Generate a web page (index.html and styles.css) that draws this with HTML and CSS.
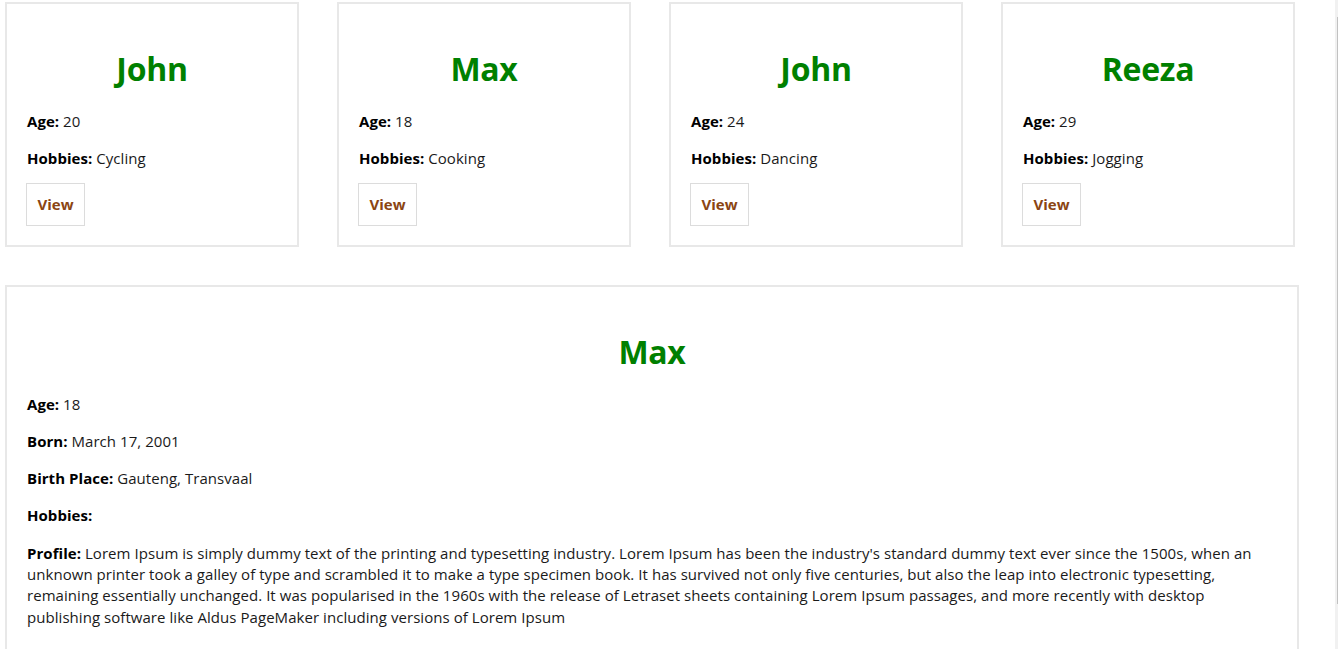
FILE: index.html
```html
<!DOCTYPE html>
<html lang="en">
<head>
<meta charset="utf-8">
<title>People</title>
<link rel="stylesheet" href="styles.css">
</head>
<body>
<div class="page">
  <div class="row">
    <div class="card">
      <h1 class="name">John</h1>
      <p><b>Age:</b> 20</p>
      <p><b>Hobbies:</b> Cycling</p>
      <button class="view">View</button>
    </div>
    <div class="card">
      <h1 class="name">Max</h1>
      <p><b>Age:</b> 18</p>
      <p><b>Hobbies:</b> Cooking</p>
      <button class="view">View</button>
    </div>
    <div class="card">
      <h1 class="name">John</h1>
      <p><b>Age:</b> 24</p>
      <p><b>Hobbies:</b> Dancing</p>
      <button class="view">View</button>
    </div>
    <div class="card">
      <h1 class="name">Reeza</h1>
      <p><b>Age:</b> 29</p>
      <p><b>Hobbies:</b> Jogging</p>
      <button class="view">View</button>
    </div>
  </div>
  <div class="detail">
    <h1 class="name">Max</h1>
    <p><b>Age:</b> 18</p>
    <p><b>Born:</b> March 17, 2001</p>
    <p><b>Birth Place:</b> Gauteng, Transvaal</p>
    <p><b>Hobbies:</b></p>
    <p><b>Profile:</b> Lorem Ipsum is simply dummy text of the printing and typesetting industry. Lorem Ipsum has been the industry's standard dummy text ever since the 1500s, when an unknown printer took a galley of type and scrambled it to make a type specimen book. It has survived not only five centuries, but also the leap into electronic typesetting, remaining essentially unchanged. It was popularised in the 1960s with the release of Letraset sheets containing Lorem Ipsum passages, and more recently with desktop publishing software like Aldus PageMaker including versions of Lorem Ipsum</p>
  </div>
</div>
<div class="scrollbar"><div class="thumb"></div></div>
</body>
</html>
```
FILE: styles.css
```css
html, body {
  margin: 0;
  padding: 0;
  overflow: hidden;
  background: #fff;
}
body {
  font-family: "Open Sans", "Noto Sans", sans-serif;
  font-size: 15px;
  line-height: 21.3px;
  color: #1a1a1a;
}
.page {
  padding: 2px 0 0 5px;
}
.row {
  display: flex;
  gap: 38px;
}
.card, .detail {
  box-sizing: border-box;
  border: 2px solid #e8e8e8;
  padding: 0 20px 18px;
  background: #fff;
}
.card {
  width: 294px;
  height: 245px;
}
.detail {
  width: 1294px;
  margin-top: 38px;
  height: 400px;
}
.name {
  color: #008000;
  text-align: center;
  font-size: 32px;
  line-height: 42.5px;
  font-weight: 700;
  margin: 44px 0 20px;
  letter-spacing: -0.3px;
}
p {
  margin: 16px 0;
  letter-spacing: 0.05px;
}
b {
  font-weight: 700;
  color: #000;
}
.view {
  display: block;
  margin: -2px 0 0 -1px;
  font-family: inherit;
  font-size: 15px;
  line-height: 21px;
  font-weight: 700;
  color: #8b4513;
  background: #fff;
  border: 1px solid #dcdcdc;
  padding: 10px 10px;
  height: 43px;
  width: 59px;
}
.scrollbar {
  position: fixed;
  top: 0;
  right: 0;
  width: 3px;
  height: 100%;
  background: #f1f1f1;
}
.thumb {
  margin: 17px 0 0 2px;
  width: 1px;
  height: 587px;
  background: #c1c1c1;
}
```
